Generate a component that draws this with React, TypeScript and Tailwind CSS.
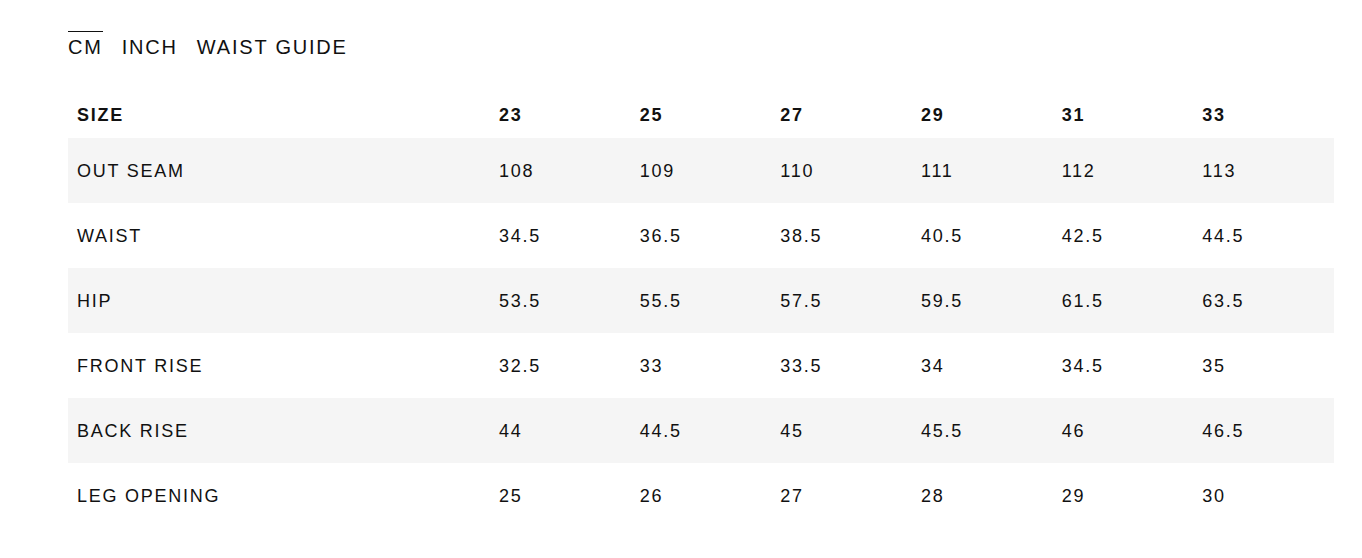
import React from "react";

const sizes = ["23", "25", "27", "29", "31", "33"];

const rows: { label: string; values: string[] }[] = [
  { label: "OUT SEAM", values: ["108", "109", "110", "111", "112", "113"] },
  { label: "WAIST", values: ["34.5", "36.5", "38.5", "40.5", "42.5", "44.5"] },
  { label: "HIP", values: ["53.5", "55.5", "57.5", "59.5", "61.5", "63.5"] },
  { label: "FRONT RISE", values: ["32.5", "33", "33.5", "34", "34.5", "35"] },
  { label: "BACK RISE", values: ["44", "44.5", "45", "45.5", "46", "46.5"] },
  { label: "LEG OPENING", values: ["25", "26", "27", "28", "29", "30"] },
];

const tabs = ["CM", "INCH", "WAIST GUIDE"];

const App = () => {
  return (
    <div className="min-h-screen bg-white text-[#111] font-['Liberation_Sans',Arial,sans-serif]">
      <div className="pl-[68px] pr-[28px] pt-[31px]">
        {/* Unit tabs */}
        <div className="flex items-start gap-[19px] text-[20px] leading-[24px] tracking-[1.8px]">
          {tabs.map((t, i) => (
            <button
              key={t}
              className={
                i === 0
                  ? "border-t border-[#111] pt-[3px]"
                  : "border-t border-transparent pt-[3px]"
              }
            >
              {t}
            </button>
          ))}
        </div>

        {/* Size table */}
        <div className="mt-[31px] w-[1266px] text-[18px] tracking-[1.75px]">
          <div className="grid grid-cols-[422px_repeat(6,1fr)] h-[48px] pt-[2px] items-center font-bold">
            <div className="pl-[9px]">SIZE</div>
            {sizes.map(s => (
              <div key={s} className="pl-[9px]">{s}</div>
            ))}
          </div>
          {rows.map((r, i) => (
            <div
              key={r.label}
              className={
                i % 2 === 0
                  ? "grid grid-cols-[422px_repeat(6,1fr)] h-[65px] pt-[1px] items-center bg-[#f5f5f5]"
                  : "grid grid-cols-[422px_repeat(6,1fr)] h-[65px] pt-[1px] items-center"
              }
            >
              <div className="pl-[9px]">{r.label}</div>
              {r.values.map((v, j) => (
                <div key={j} className="pl-[9px]">{v}</div>
              ))}
            </div>
          ))}
        </div>
      </div>
    </div>
  );
};

export default App;
